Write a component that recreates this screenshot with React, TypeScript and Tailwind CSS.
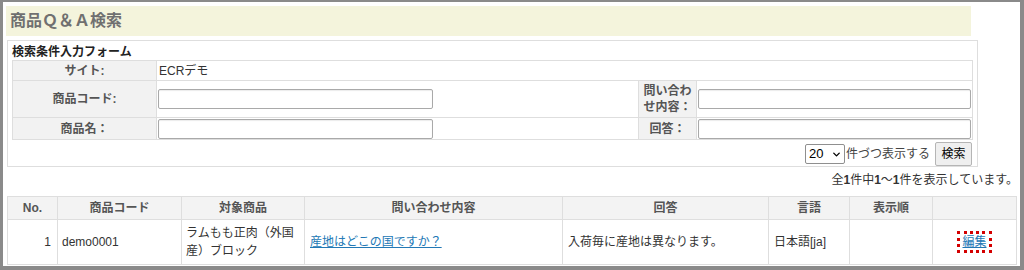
import { ChevronDown } from 'lucide-react'

const font = 'font-["Liberation_Sans","Noto_Sans_CJK_JP",sans-serif]'

function Label({ children }: { children: React.ReactNode }) {
  return <td className="border border-[#dedede] bg-[#f2f2f2] text-center font-bold text-[#555] text-[12px] leading-[16px] px-[4px]">{children}</td>
}

function TextInput({ w }: { w: string }) {
  return <input type="text" className={`${w} h-[20px] border border-[#a9a9a9] rounded-[2px] bg-white shadow-[inset_0_1px_1px_rgba(0,0,0,0.08)] align-middle`} />
}

const cols = [
  { name: 'No.', w: 'w-[50px]' },
  { name: '商品コード', w: 'w-[124px]' },
  { name: '対象商品', w: 'w-[123px]' },
  { name: '問い合わせ内容', w: 'w-[258px]' },
  { name: '回答', w: 'w-[206px]' },
  { name: '言語', w: 'w-[81px]' },
  { name: '表示順', w: 'w-[83px]' },
  { name: '', w: 'w-[84px]' },
]

export default function App() {
  return (
    <div className={`${font} w-[1024px] h-[270px] overflow-hidden bg-white border-l-[3px] border-t-2 border-r-[4px] border-b-[4px] border-[#8a8a8a] text-[#333] text-[12px]`}>
      <div className="pl-[3px] pt-[4px]">
        <div className="w-[965px] h-[30px] bg-[#f4f4dc] flex items-center pl-[4px]">
          <h1 className="text-[16px] font-bold text-[#707070]">商品Ｑ＆Ａ検索</h1>
        </div>

        <div className="ml-[1px] mt-[4px] w-[971px] h-[127px] border border-[#dedede] pl-[4px] pr-[5px] pt-[4px]">
          <div className="font-bold text-[12px] leading-[15px] text-[#222] h-[15px]">検索条件入力フォーム</div>
          <table className="w-[960px] border-collapse table-fixed">
            <colgroup>
              <col className="w-[144px]" />
              <col className="w-[482px]" />
              <col className="w-[58px]" />
              <col className="w-[276px]" />
            </colgroup>
            <tbody>
              <tr className="h-[20px]">
                <Label>サイト:</Label>
                <td colSpan={3} className="border border-[#dedede] pl-[2px] text-[12px]">ECRデモ</td>
              </tr>
              <tr className="h-[37px]">
                <Label>商品コード:</Label>
                <td className="border border-[#dedede] pl-[1px]"><TextInput w="w-[275px]" /></td>
                <Label>問い合わ<br />せ内容：</Label>
                <td className="border border-[#dedede] pl-[1px]"><TextInput w="w-[273px]" /></td>
              </tr>
              <tr className="h-[22px]">
                <Label>商品名：</Label>
                <td className="border border-[#dedede] pl-[1px]"><TextInput w="w-[275px]" /></td>
                <Label>回答：</Label>
                <td className="border border-[#dedede] pl-[1px]"><TextInput w="w-[273px]" /></td>
              </tr>
            </tbody>
          </table>
          <div className="flex items-center justify-end mt-[2px] h-[24px]">
            <div className="w-[40px] h-[20px] border border-[#8f8f8f] rounded-[2px] flex items-center justify-between pl-[3px] pr-[2px] text-[13px] text-black">
              <span>20</span>
              <ChevronDown size={11} strokeWidth={3} />
            </div>
            <span className="ml-[1px] text-[12px] text-[#444]">件づつ表示する</span>
            <button className="ml-[5px] w-[37px] h-[24px] border border-[#b5b5b5] bg-[#efefef] rounded-[2px] text-[12px] text-black">検索</button>
          </div>
        </div>

        <div className="w-[1012px] text-right mt-[6px] leading-[14px] text-[12px] text-[#333]">
          全<b>1</b>件中<b>1</b>〜<b>1</b>件を表示しています。
        </div>

        <table className="ml-[1px] mt-[9px] w-[1009px] border-collapse table-fixed">
          <colgroup>
            {cols.map((c, i) => <col key={i} className={c.w} />)}
          </colgroup>
          <thead>
            <tr className="h-[23px] bg-[#f3f3f3]">
              {cols.map((c, i) => (
                <th key={i} className="border border-[#dedede] font-bold text-[#555] text-[12px] text-center">{c.name}</th>
              ))}
            </tr>
          </thead>
          <tbody>
            <tr className="h-[45px]">
              <td className="border border-[#dedede] text-right pr-[6px]">1</td>
              <td className="border border-[#dedede] pl-[4px]">demo0001</td>
              <td className="border border-[#dedede] pl-[4px] leading-[18px]">ラムもも正肉（外国産）ブロック</td>
              <td className="border border-[#dedede] pl-[5px]">
                <a href="#" className="text-[#2278b5] underline">産地はどこの国ですか？</a>
              </td>
              <td className="border border-[#dedede] pl-[5px]">入荷毎に産地は異なります。</td>
              <td className="border border-[#dedede] pl-[5px]">日本語[ja]</td>
              <td className="border border-[#dedede]"></td>
              <td className="border border-[#dedede] text-center">
                <a href="#" className="inline-block text-[#2278b5] underline px-[2px] outline-[3px] outline-dotted outline-[#d40000] leading-[16px]">編集</a>
              </td>
            </tr>
          </tbody>
        </table>
      </div>
    </div>
  )
}
